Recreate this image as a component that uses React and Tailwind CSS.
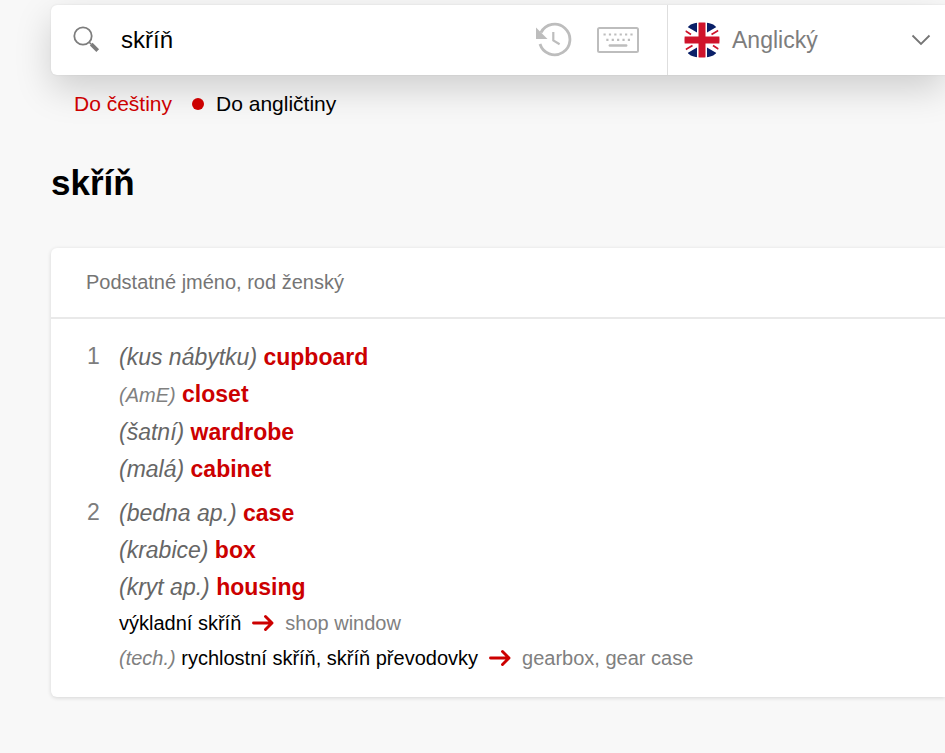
import React from "react";

const senses = [
  {
    number: 1,
    items: [
      { note: "(kus nábytku)", word: "cupboard" },
      { label: "(AmE)", word: "closet" },
      { note: "(šatní)", word: "wardrobe" },
      { note: "(malá)", word: "cabinet" },
    ],
    phrases: [],
  },
  {
    number: 2,
    items: [
      { note: "(bedna ap.)", word: "case" },
      { note: "(krabice)", word: "box" },
      { note: "(kryt ap.)", word: "housing" },
    ],
    phrases: [
      { source: "výkladní skříň", target: "shop window" },
      {
        label: "(tech.)",
        source: "rychlostní skříň, skříň převodovky",
        target: "gearbox, gear case",
      },
    ],
  },
];

function SearchIcon() {
  return (
    <svg className="size-7" viewBox="0 0 28 28" fill="none" stroke="#7d7d7d" aria-hidden="true">
      <circle cx="10" cy="10" r="8.7" strokeWidth="1.8" />
      <path d="M16.2 16.2l2 2" strokeWidth="1.6" />
      <path d="M18.2 18.2l6.5 6.5" strokeWidth="3.8" />
    </svg>
  );
}

function HistoryIcon() {
  return (
    <svg className="h-9 w-9" viewBox="0 0 36 36" fill="none" stroke="#bdbdbd" aria-hidden="true">
      <path d="M5 10.5A15.3 15.3 0 1 1 4 22" strokeWidth="2.8" />
      <path d="M0 5.5V17h11.5z" fill="#bdbdbd" stroke="none" />
      <path d="M17.3 10v8.5l6.3 3.8" strokeWidth="2.2" />
    </svg>
  );
}

function KeyboardIcon() {
  return (
    <svg className="h-[26px] w-[42px]" viewBox="0 0 42 26" fill="none" stroke="#bdbdbd" aria-hidden="true">
      <rect x="1" y="1" width="40" height="24" rx="1.5" strokeWidth="2" />
      <path d="M6.5 7.5h30" strokeWidth="2.2" strokeDasharray="2.2 3.18" />
      <path d="M9.3 12.8h24" strokeWidth="2.2" strokeDasharray="2.2 3.18" />
      <path d="M12.8 18.5h16.4" strokeWidth="2.4" strokeLinecap="round" />
    </svg>
  );
}

function FlagIcon() {
  return (
    <svg className="h-9 w-9 shrink-0" viewBox="0 0 36 36" aria-hidden="true">
      <clipPath id="flag-shape">
        <path d="M18 .5C31 .5 35.5 5 35.5 18S31 35.5 18 35.5.5 31 .5 18 5 .5 18 .5z" />
      </clipPath>
      <g clipPath="url(#flag-shape)">
        <path d="M0 0h36v36H0z" fill="#fff" />
        <path d="M1 3.5L5 0h8v10.5zM35 3.500L31 0h-8v10.500zM1 32.500L5 36h8V25.500zM35 32.500L31 36h-8V25.500z" fill="#0a2068" />
        <path d="M0 8l7 4.500M36 28l-7-4.500M36 7.500l-8.500 5M0 28.500l8.500-5" stroke="#cf142b" strokeWidth="1.8" />
        <path d="M18 0v36M0 18h36" stroke="#cf142b" strokeWidth="7" />
      </g>
    </svg>
  );
}

function Arrow() {
  return (
    <svg className="mx-2.5 inline-block h-[18px] w-6 align-[-2px]" viewBox="0 0 24 18" fill="none" stroke="#cc0000" strokeWidth="2.9" strokeLinecap="round" strokeLinejoin="round" aria-label="→">
      <path d="M2.5 9h18M14.5 2.5L21 9l-6.5 6.5" />
    </svg>
  );
}

function SearchBar() {
  return (
    <form className="flex h-[70px] rounded-l-md bg-white shadow-[0_14px_36px_rgba(0,0,0,0.17),0_0_2px_rgba(0,0,0,0.1)]" onSubmit={(e) => e.preventDefault()}>
      <div className="flex min-w-0 flex-1 items-center pr-7 pl-[22px]">
        <button type="submit" aria-label="Hledat">
          <SearchIcon />
        </button>
        <input
          type="text"
          aria-label="Hledané slovo"
          defaultValue="skříň"
          className="ml-5 min-w-0 flex-1 bg-transparent text-2xl text-black outline-none"
        />
        <button type="button" aria-label="Historie" className="mr-[25px]">
          <HistoryIcon />
        </button>
        <button type="button" aria-label="Klávesnice">
          <KeyboardIcon />
        </button>
      </div>
      <button type="button" className="flex w-[278px] items-center border-l border-[#dedede] pr-3 pl-4 text-[23px] text-[#7d7d7d]">
        <FlagIcon />
        <span className="ml-3 flex-1 text-left">Anglický</span>
        <svg className="h-3 w-6" viewBox="0 0 24 12" fill="none" stroke="#757575" strokeWidth="1.8" aria-hidden="true">
          <path d="M3.5 1.5L12 10l8.5-8.5" />
        </svg>
      </button>
    </form>
  );
}

export default function App() {
  return (
    <div className="min-h-screen overflow-hidden bg-[#f8f8f8] pt-[5px] pl-[51px] font-['Liberation_Sans',Arial,sans-serif] text-black">
      <SearchBar />
      <nav className="relative flex items-center pt-3.5 pl-[23px] text-[21px] leading-[30px]">
        <a href="#cs" className="text-[#cc0000]">Do češtiny</a>
        <span className="mr-3 ml-5 size-3 rounded-full bg-[#cc0000]" />
        <a href="#en">Do angličtiny</a>
      </nav>
      <main>
        <h1 className="mt-11 text-[35px] leading-10 font-bold">skříň</h1>
        <section className="mt-[45px] rounded-l-md bg-white shadow-[0_1px_4px_rgba(0,0,0,0.14)]">
          <h2 className="border-b-2 border-[#e9e9e9] pl-[35px] text-[20px] leading-[69px] text-[#757575]">
            Podstatné jméno, rod ženský
          </h2>
          <ol className="flex flex-col gap-[7px] pt-5 pb-[21px] pl-9">
            {senses.map((sense) => (
              <li key={sense.number} className="flex">
                <span className="w-8 text-[23px] leading-[35px] text-[#7d7d7d]">{sense.number}</span>
                <div className="flex-1">
                  {sense.items.map((item) => (
                    <p key={item.word} className="text-[23px] leading-[37px]">
                      {item.note && <i className="text-[#666666]">{item.note}</i>}
                      {item.label && <i className="text-[20px] text-[#808080]">{item.label}</i>}{" "}
                      <a href={"#" + item.word} className="font-bold text-[#cc0000]">{item.word}</a>
                    </p>
                  ))}
                  {sense.phrases.map((phrase) => (
                    <p key={phrase.source} className="text-[20px] leading-[35px]">
                      {phrase.label && <i className="text-[#808080]">{phrase.label} </i>}
                      {phrase.source}
                      <Arrow />
                      <a href={"#" + phrase.target} className="text-[#808080]">{phrase.target}</a>
                    </p>
                  ))}
                </div>
              </li>
            ))}
          </ol>
        </section>
      </main>
    </div>
  );
}
